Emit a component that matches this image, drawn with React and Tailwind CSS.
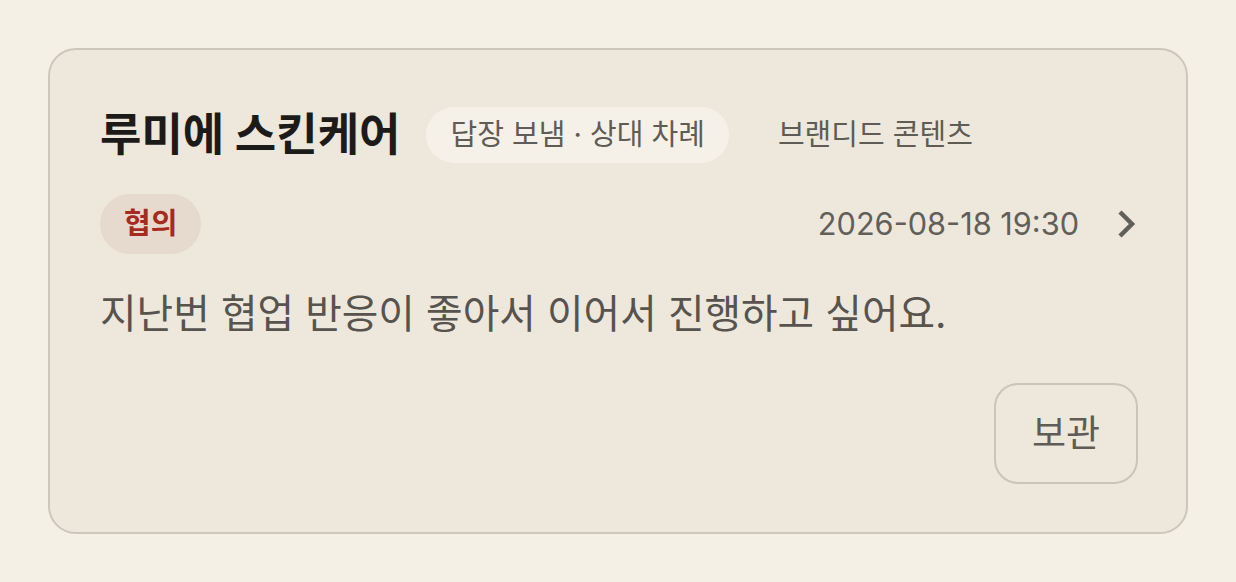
export default function App() {
  const font = { fontFamily: 'Inter, "Noto Sans CJK KR", sans-serif' };
  return (
    <div className="min-h-[582px] w-full bg-[#f4f0e6] p-[48px]" style={font}>
      <div className="flex flex-col rounded-[28px] border-2 border-[#cbc7bb] bg-[#ede7dc] pb-[48px] pl-[50px] pr-[48px] pt-[57px]">
        <div className="flex items-center">
          <h1 className="text-[45px] font-bold leading-[56px] text-[#1c1b19]">루미에 스킨케어</h1>
          <span className="ml-[26px] flex h-[56px] items-center rounded-full bg-[#f5f1e8] px-[24px] text-[29px] text-[#5f5b55]">
            답장 보냄 · 상대 차례
          </span>
          <span className="ml-[49px] text-[29px] text-[#5f5b55]">브랜디드 콘텐츠</span>
        </div>
        <div className="mt-[31px] flex items-center justify-between">
          <span className="flex h-[60px] items-center rounded-full bg-[#e6dace] px-[24px] text-[29px] font-bold text-[#a62a1f]">
            협의
          </span>
          <div className="flex items-center">
            <span className="text-[30.7px] text-[#625f5a]">2026-08-18 19:30</span>
            <svg className="ml-[37px] mr-[2px]" width="20" height="30" viewBox="0 0 20 30" fill="none">
              <path d="M4 3 L16 15 L4 27" stroke="#625f5a" strokeWidth="4.5" strokeLinecap="butt" strokeLinejoin="miter" />
            </svg>
          </div>
        </div>
        <p className="mt-[35px] text-[39.75px] leading-[50px] text-[#57534e]">
          지난번 협업 반응이 좋아서 이어서 진행하고 싶어요.
        </p>
        <div className="mt-[44px] flex justify-end">
          <button className="flex h-[101px] w-[144px] items-center justify-center rounded-[24px] border-2 border-[#c9c5b9] text-[37px] text-[#5f5c57]">
            보관
          </button>
        </div>
      </div>
    </div>
  );
}
